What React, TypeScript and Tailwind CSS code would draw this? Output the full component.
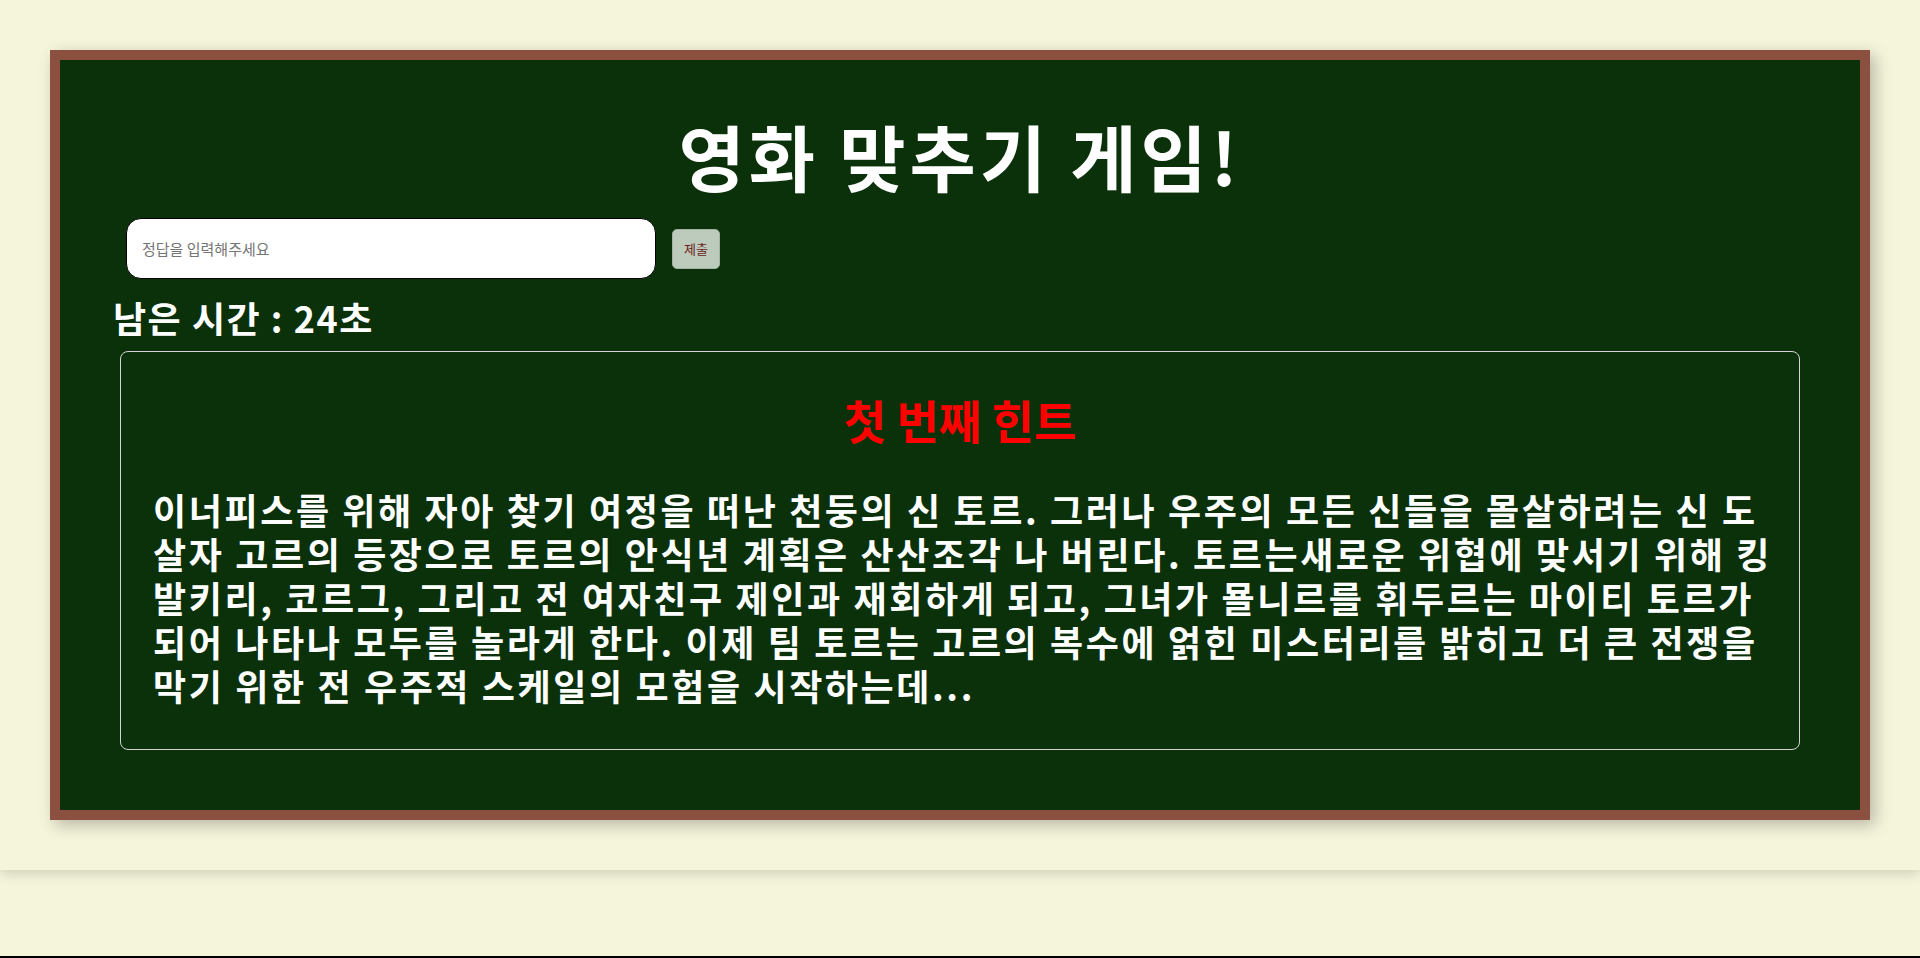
const hint =
  "이너피스를 위해 자아 찾기 여정을 떠난 천둥의 신 토르. 그러나 우주의 모든 신들을 몰살하려는 신 도살자 고르의 등장으로 토르의 안식년 계획은 산산조각 나 버린다. 토르는새로운 위협에 맞서기 위해 킹 발키리, 코르그, 그리고 전 여자친구 제인과 재회하게 되고, 그녀가 묠니르를 휘두르는 마이티 토르가 되어 나타나 모두를 놀라게 한다. 이제 팀 토르는 고르의 복수에 얽힌 미스터리를 밝히고 더 큰 전쟁을 막기 위한 전 우주적 스케일의 모험을 시작하는데...";

const AnswerForm = () => (
  <div className="mt-[27px] ml-[66px] flex items-center gap-4">
    <input
      type="text"
      placeholder="정답을 입력해주세요"
      className="w-[530px] h-[61px] rounded-[15px] border border-black bg-white px-[15px] text-[15px] text-black placeholder:text-[#757575] outline-none"
    />
    <button className="h-[40px] px-[11px] rounded-[5px] border border-[#a3b4a3] bg-[#bccbbb] text-[13px] text-[#6b1e1e]">
      제출
    </button>
  </div>
);

const HintCard = () => (
  <div className="mt-3 mx-[60px] rounded-lg border border-[#d4d4d4] pl-8 pr-[19px] pt-[43px] pb-[42px]">
    <h2 className="-ml-[13px] text-center text-[46px] leading-[48px] font-bold text-[#ff0000]">
      첫 번째 힌트
    </h2>
    <p className="mt-[44px] text-[36px] leading-[44px] tracking-[2.6px] font-bold text-white">
      {hint}
    </p>
  </div>
);

export default function App() {
  return (
    <div className="min-h-screen bg-[#f5f5dc] font-['Noto_Sans_CJK_KR',sans-serif]">
      <div className="p-[50px] shadow-[0_4px_12px_rgba(0,0,0,0.15)]">
        <div className="h-[770px] border-[10px] border-[#8b5040] bg-[#0b310b] shadow-[5px_5px_15px_rgba(0,0,0,0.25)] flex flex-col">
          <h1 className="mt-[59px] text-center text-[72px] leading-[72px] tracking-[4px] font-bold text-white">
            영화 맞추기 게임!
          </h1>
          <AnswerForm />
          <p className="mt-4 ml-[53px] text-[36px] leading-[44px] tracking-[1.5px] font-bold text-white">
            남은 시간 : 24초
          </p>
          <HintCard />
        </div>
      </div>
      <div className="h-[86px]" />
      <div className="h-[2px] bg-black" />
    </div>
  );
}
